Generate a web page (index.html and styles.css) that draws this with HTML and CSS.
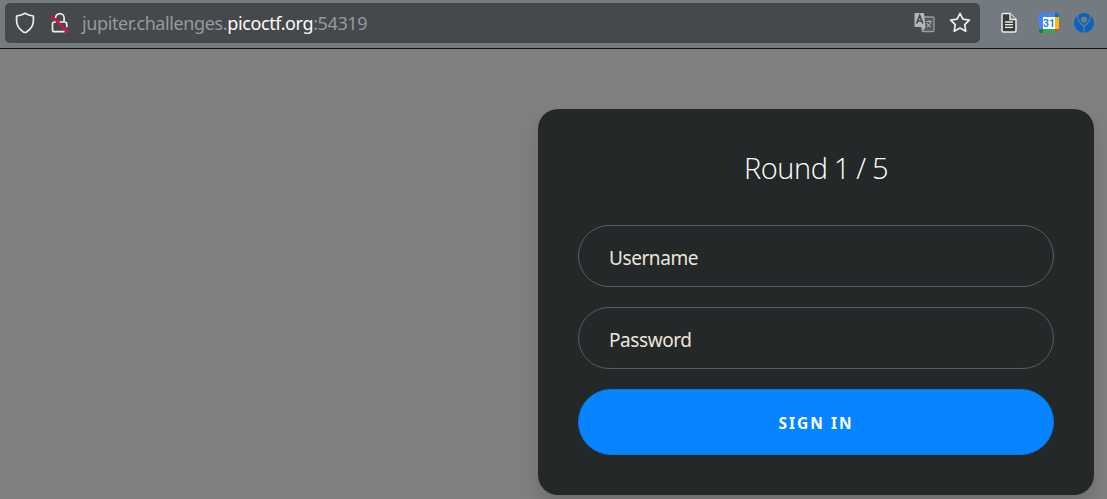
FILE: index.html
```html
<!DOCTYPE html>
<html lang="en">
<head>
<meta charset="utf-8">
<title>Round 1 / 5</title>
<link rel="stylesheet" href="styles.css">
</head>
<body>
<header class="toolbar">
  <div class="address">
    <svg class="icon shield" width="20" height="22" viewBox="0 0 20 22"><path d="M10 1.2C7.5 2.7 4.8 3.5 1.6 4v4.8c0 5 3 8.7 6.8 11.2q1.6 1 3.2 0c3.8-2.5 6.8-6.2 6.8-11.2V4C15.200 3.500 12.500 2.700 10 1.200Z"/></svg>
    <svg class="icon lock" width="20" height="22" viewBox="0 0 20 22"><path d="M5.500 6a4.300 4.300 0 0 1 8.600 0v3.500M9.500 10h5q2.300 0 2.300 2.300v3M14.500 19.700H4.500q-2 0-2-2v-5.400Q2.500 10 4.500 10H6"/><path class="slash" d="M1.300 3.700 18.300 20.300"/></svg>
    <div class="url"><span>jupiter.challenges.</span><span class="host">picoctf.org</span><span>:54319</span></div>
    <svg class="translate" width="21" height="21" viewBox="0 0 21 21"><rect x="8" y="5" width="12" height="14.500" rx="1" fill="#555a5c" stroke="#9a9c9e" stroke-width="1.300"/><path d="M12 9.500h6M15 8v1.500M17 9.500q-.5 3-4 5.500M13 11q1 3 4 4" fill="none" stroke="#a6a8aa" stroke-width="1.200"/><path d="M1.500 1H10l1.500 14H1.500q-1 0-1-1V2q0-1 1-1Z" fill="#b3b5b6"/><path d="m11.500 15-2 4-2-4Z" fill="#b3b5b6"/><path d="M2.600 11.500 5.700 3.500l3.100 8M3.700 9h4" fill="none" stroke="#43484a" stroke-width="1.700"/></svg>
    <svg class="icon star" width="22" height="21" viewBox="0 0 22 21"><path d="m11 1.300 2.900 5.900 6.500.9-4.700 4.600 1.100 6.500-5.800-3.100-5.800 3.100 1.100-6.500L1.600 8.100l6.500-.9Z"/></svg>
  </div>
  <svg class="document" width="18" height="22" viewBox="0 0 18 22"><path d="M3.500 1.500H10L16 7.500v11q0 1.500-1.500 1.500h-11Q2 20 2 18.500V3Q2 1.500 3.500 1.500Z" fill="#393d3f" stroke="#ececec" stroke-width="1.500"/><path d="M10 1.500v6h6" fill="#777e82" stroke="#ececec" stroke-width="1.400"/><path d="M5 10h8M5 12.700h8M5 15.400h8" stroke="#ececec" stroke-width="1.300"/></svg>
  <svg class="calendar" width="20" height="20" viewBox="0 0 20 20"><path d="M1.500 0h14.500v4H4v12H0V1.500Q0 0 1.500 0Z" fill="#4285f4"/><path d="M16 0h2.500Q20 0 20 1.500V4h-4Z" fill="#1967d2"/><path d="M16 4h4v12h-4Z" fill="#fbbc04"/><path d="M4 16h12v4H4Z" fill="#34a853"/><path d="M0 16h4v4H1.500Q0 20 0 18.500Z" fill="#188038"/><path d="M16 16h4l-4 4Z" fill="#ea4335"/><path d="M4 4h12v12H4Z" fill="#fff"/><text x="10" y="14" class="day">31</text></svg>
  <svg class="extension" width="22" height="22" viewBox="0 0 22 22"><circle cx="11" cy="11" r="10" fill="#0864bf"/><path d="M4.500 2.500Q4 9.500 11 14.300 18 9.500 17.500 2.500" fill="none" stroke="#747b80" stroke-width="1.300"/><path d="M11 14V22" stroke="#747b80" stroke-width="1.300"/><path d="m11 4.200 3 1.700v3.400L11 11 8 9.300V5.900Z" fill="#747b80"/></svg>
</header>
<main class="page">
  <form class="card">
    <h1 class="title">Round 1 / 5</h1>
    <input class="field" type="text" placeholder="Username" aria-label="Username">
    <input class="field" type="password" placeholder="Password" aria-label="Password">
    <button class="submit" type="button">SIGN IN</button>
  </form>
</main>
</body>
</html>
```
FILE: styles.css
```css
* { box-sizing: border-box; }
body {
  margin: 0;
  height: 499px;
  overflow: hidden;
  background: #808080;
  font-family: "Open Sans", "Noto Sans", sans-serif;
}
svg { display: block; flex: none; }
.toolbar {
  display: flex;
  align-items: center;
  height: 49px;
  padding: 0 12px 3px 5px;
  background: #747b80;
  border-bottom: 1px solid #111;
}
.address {
  display: flex;
  align-items: center;
  width: 975px;
  height: 40px;
  padding: 0 9px 0 10px;
  background: #45494b;
  border-radius: 5px;
}
.icon { fill: none; stroke: #ececec; stroke-width: 1.700; stroke-linejoin: round; }
.lock { margin-left: 15px; }
.lock .slash { stroke: #f0083c; stroke-width: 2; }
.url {
  flex: 1;
  margin-left: 12px;
  font-family: "Noto Sans", sans-serif;
  font-size: 18px;
  line-height: 24px;
  letter-spacing: -0.39px;
  color: #96999b;
  white-space: nowrap;
}
.host { color: #fbfbfb; }
.star { margin-left: 14px; }
.document { margin-left: 20px; }
.calendar { margin-left: 21px; }
.extension { margin-left: 14px; }
.day {
  font: bold 10.500px Roboto, sans-serif;
  fill: #3479e8;
  text-anchor: middle;
}
.page {
  display: flex;
  justify-content: flex-end;
  padding: 60px 13px 0 0;
}
.card {
  display: flex;
  flex-direction: column;
  width: 556px;
  height: 386px;
  padding: 40px;
  background: #252829;
  border-radius: 20px;
  box-shadow: 0 10px 20px rgba(0, 0, 0, .15);
}
.title {
  margin: 0 0 38px;
  font-size: 29px;
  line-height: 38px;
  font-weight: 300;
  letter-spacing: -0.45px;
  word-spacing: -0.8px;
  text-align: center;
  color: #fff;
}
.field {
  width: 100%;
  height: 62px;
  margin: 0 0 20px;
  padding: 4px 30px 0;
  font-family: "Noto Sans", sans-serif;
  font-size: 19px;
  letter-spacing: -0.42px;
  color: #e8e6e3;
  background: transparent;
  border: 1px solid #575c5e;
  border-radius: 31px;
}
.field::placeholder { color: #ebe6dc; opacity: 1; }
.submit {
  height: 66px;
  padding: 2px 0 0;
  font-family: "Noto Sans", sans-serif;
  font-size: 15.500px;
  font-weight: 700;
  letter-spacing: 2px;
  color: #fff;
  background: #0784ff;
  border: 1px solid #0878e5;
  border-radius: 33px;
}
```
